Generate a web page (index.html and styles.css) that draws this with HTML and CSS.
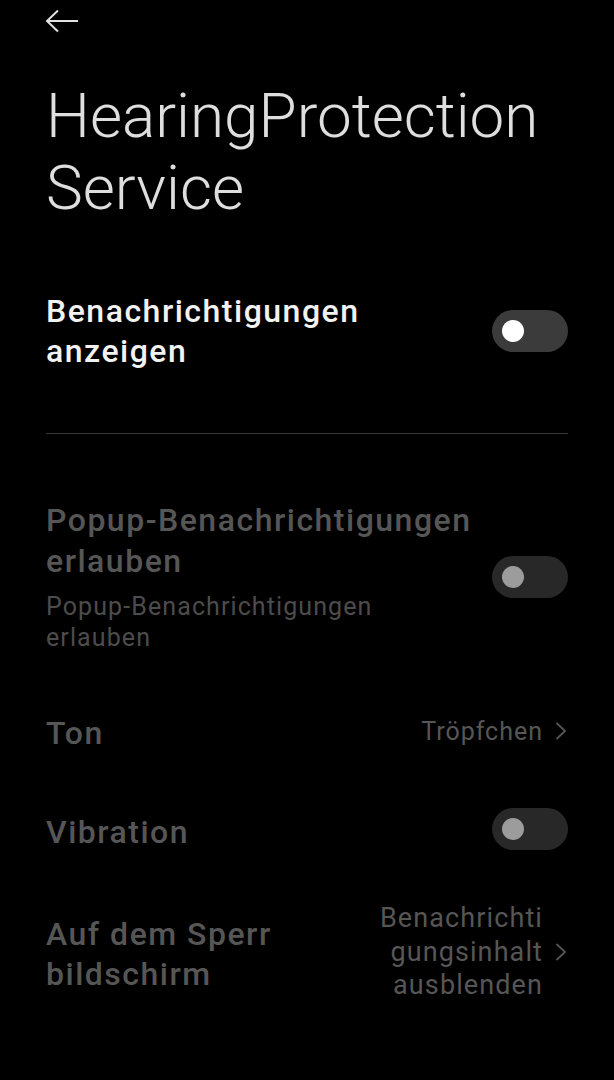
FILE: index.html
```html
<!DOCTYPE html>
<html lang="de">
<head>
    <meta charset="UTF-8">
    <meta name="viewport" content="width=device-width, initial-scale=1.0">
    <title>HearingProtection Service</title>
    <link rel="stylesheet" href="styles.css">
</head>
<body>

    <div class="topbar">
        <svg class="back" width="34" height="24" viewBox="0 0 34 24">
            <path d="M33 12 H2 M13 1.5 L2 12 L13 22.5" fill="none" stroke="#e2e2e2" stroke-width="2"/>
        </svg>
    </div>

    <h1 class="title">HearingProtection Service</h1>

    <div class="row">
        <div class="label">Benachrichtigungen<br>anzeigen</div>
        <div class="switch"><span class="knob"></span></div>
    </div>

    <hr class="divider">

    <div class="row disabled">
        <div class="text">
            <div class="label">Popup-Benachrichtigungen<br>erlauben</div>
            <div class="summary">Popup-Benachrichtigungen<br>erlauben</div>
        </div>
        <div class="switch"><span class="knob"></span></div>
    </div>

    <div class="row disabled">
        <div class="label">Ton</div>
        <div class="value">
            <span>Tröpfchen</span>
            <svg class="chevron" width="12" height="18" viewBox="0 0 12 18">
                <path d="M1.5 1 L10 9 L1.5 17" fill="none" stroke="#555" stroke-width="1.8"/>
            </svg>
        </div>
    </div>

    <div class="row disabled short">
        <div class="label">Vibration</div>
        <div class="switch raised"><span class="knob"></span></div>
    </div>

    <div class="row disabled tall">
        <div class="label">Auf dem Sperr<br>bildschirm</div>
        <div class="value">
            <span class="multi">Benachrichti<br>gungsinhalt<br>ausblenden</span>
            <svg class="chevron" width="12" height="18" viewBox="0 0 12 18">
                <path d="M1.5 1 L10 9 L1.5 17" fill="none" stroke="#555" stroke-width="1.8"/>
            </svg>
        </div>
    </div>

</body>
</html>
```

FILE: styles.css
```css
:root {
    --hintergrund: #000000;
    --titel: #dedede;
    --text: #f2f2f2;
    --grau: #565656;
    --grau-hell: #4c4c4c;
    --schalter: #3b3b3b;
    --schalter-aus: #282828;
}

body {
    margin: 0;
    padding: 0 46px;
    background-color: var(--hintergrund);
    color: var(--text);
    font-family: Roboto, "Noto Sans", sans-serif;
}

.topbar {
    height: 41px;
    display: flex;
    align-items: center;
}

.back {
    display: block;
    margin-left: -1px;
}

.title {
    margin: 39px 0 37px;
    font-size: 62px;
    font-weight: 300;
    line-height: 72px;
    color: var(--titel);
    width: 500px;
}

.row {
    display: flex;
    align-items: center;
    justify-content: space-between;
    padding: 30px 0;
}

.row.short {
    padding-top: 29px;
    padding-bottom: 29px;
}

.row.tall {
    padding-top: 25px;
    padding-bottom: 19px;
}

.label {
    font-size: 32px;
    font-weight: 500;
    line-height: 40px;
    letter-spacing: 1.5px;
}

.disabled .label {
    color: var(--grau);
}

.disabled .text .label {
    line-height: 41px;
}

.summary {
    margin-top: 9px;
    font-size: 25px;
    line-height: 31px;
    letter-spacing: 1.1px;
    color: var(--grau-hell);
}

.divider {
    border: none;
    border-top: 1px solid #353535;
    margin: 32px 0 36px;
}

.switch {
    width: 76px;
    height: 42px;
    border-radius: 21px;
    background-color: var(--schalter);
    display: flex;
    align-items: center;
    flex-shrink: 0;
}

.switch.raised {
    margin-top: -6px;
}

.knob {
    width: 22px;
    height: 22px;
    border-radius: 50%;
    margin-left: 10px;
    background-color: #ffffff;
}

.disabled .switch {
    background-color: var(--schalter-aus);
}

.disabled .knob {
    background-color: #9c9c9c;
}

.value {
    display: flex;
    align-items: center;
    gap: 12px;
    font-size: 25px;
    letter-spacing: 1px;
    color: var(--grau);
    margin-top: -4px;
}

.value .multi {
    text-align: right;
    font-size: 27px;
    line-height: 33.5px;
    letter-spacing: 1.1px;
}

.chevron {
    display: block;
    margin-right: 1px;
}
```
